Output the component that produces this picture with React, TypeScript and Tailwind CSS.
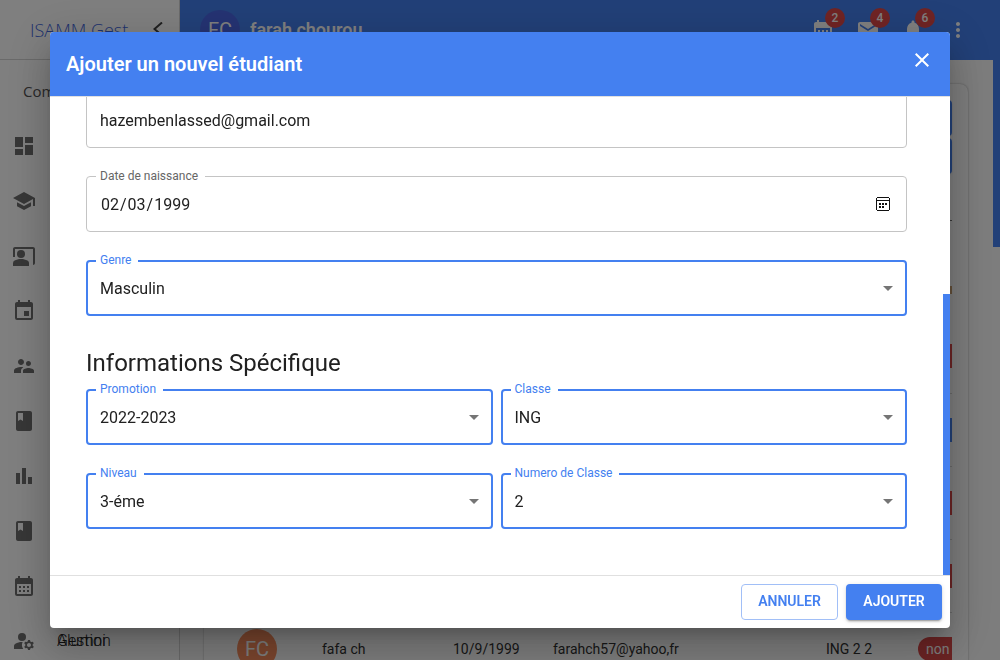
import { useId } from "react";
import type { ReactNode } from "react";
import type { IconType } from "react-icons";
import {
  MdArrowDropDown,
  MdBarChart,
  MdCalendarMonth,
  MdClass,
  MdClose,
  MdCoPresent,
  MdDashboard,
  MdEmail,
  MdEvent,
  MdManageAccounts,
  MdMoreVert,
  MdNotifications,
  MdSchool,
  MdSupervisorAccount,
} from "react-icons/md";

const navigation: { name: string; icon: IconType; labels?: string[] }[] = [
  { name: "Dashboard", icon: MdDashboard },
  { name: "Etudiants", icon: MdSchool },
  { name: "Enseignants", icon: MdCoPresent },
  { name: "Evénements", icon: MdEvent },
  { name: "Alumni", icon: MdSupervisorAccount },
  { name: "Stages", icon: MdClass },
  { name: "Statistiques", icon: MdBarChart },
  { name: "Projets", icon: MdClass },
  { name: "Calendrier", icon: MdCalendarMonth },
  { name: "Gestion Alumni", icon: MdManageAccounts, labels: ["Gestion", "Alumni"] },
];

const notifications: { name: string; count: number; icon: IconType }[] = [
  { name: "Calendrier", count: 2, icon: MdCalendarMonth },
  { name: "Messages", count: 4, icon: MdEmail },
  { name: "Notifications", count: 6, icon: MdNotifications },
];

function Sidebar() {
  return (
    <aside className="flex w-[180px] shrink-0 flex-col border-r border-[#d4d4d4] bg-white">
      <div className="flex h-[60px] shrink-0 items-center justify-between border-b border-[#d4d4d4] pr-4 pl-[30px]">
        <span className="font-['Open_Sans',sans-serif] text-lg font-light text-[#3c64dc]">ISAMM Gest</span>
        <button type="button" aria-label="Réduire le menu" className="text-[#404040]">
          <svg width="10" height="16" viewBox="0 0 10 16" fill="none" stroke="currentColor" strokeWidth="2">
            <path d="M9 0.5 1.5 7 9 13.5" />
          </svg>
        </button>
      </div>
      <p className="h-[58px] shrink-0 px-[23px] pt-[19px] font-['Open_Sans',sans-serif] text-[15px] leading-6 text-[#525252]">
        Com
      </p>
      <nav className="flex flex-col">
        {navigation.map(({ name, icon: Icon, labels }) => (
          <a key={name} href="#" aria-label={name} className="flex h-[55px] shrink-0 items-center gap-[21px] px-3">
            <Icon className="size-6 shrink-0 text-[#6e6e6e]" />
            {labels && (
              <span className="grid text-base font-light text-[#202020]">
                {labels.map((label) => (
                  <span key={label} className="col-start-1 row-start-1">
                    {label}
                  </span>
                ))}
              </span>
            )}
          </a>
        ))}
      </nav>
    </aside>
  );
}

function TopBar() {
  return (
    <header className="flex h-[60px] shrink-0 items-center bg-[#4480f0] pr-[23px] pl-5 text-white">
      <span className="flex size-10 items-center justify-center rounded-full bg-[#4a66e6] text-xl">FC</span>
      <span className="ml-[10px] text-lg font-semibold">farah chourou</span>
      <div className="ml-auto flex items-center gap-[21px]">
        {notifications.map(({ name, count, icon: Icon }) => (
          <button key={name} type="button" aria-label={name} className="relative">
            <Icon className="size-6" />
            <span className="absolute -top-[10px] left-[14px] flex size-5 items-center justify-center rounded-full bg-[#e04848] text-xs font-medium">
              {count}
            </span>
          </button>
        ))}
        <button type="button" aria-label="Plus">
          <MdMoreVert className="size-6" />
        </button>
      </div>
    </header>
  );
}

function StatusCell({ children, className }: { children?: ReactNode; className: string }) {
  return (
    <td className="p-0 pl-4">
      <span className={className}>{children}</span>
    </td>
  );
}

function StudentsCard() {
  return (
    <section className="mt-6 mr-[25px] ml-6 flex-1 rounded-lg bg-[#fdfdfd] p-4 shadow-[0_0_2px_rgba(0,0,0,0.35)]">
      <div className="flex flex-col items-end gap-[2px]">
        <button type="button" aria-label="Ajouter" className="h-9 w-32 rounded bg-[#4480f0] shadow" />
        <button type="button" aria-label="Importer" className="h-9 w-32 rounded bg-[#4480f0] shadow" />
      </div>
      <div className="ml-auto h-[47px] w-48 border-b border-[#707070]" />
      <div className="mt-[26px] overflow-hidden">
        <table className="w-full table-fixed border-collapse text-left text-sm text-[#303030]">
          <colgroup>
            <col className="w-[86px]" />
            <col className="w-[131px]" />
            <col className="w-[100px]" />
            <col />
            <col className="w-[92px]" />
            <col className="w-[50px]" />
          </colgroup>
          <tbody>
            <tr className="h-[73px]">
              <td colSpan={5} />
              <StatusCell className="mt-3 block h-2 w-16 bg-[#c8a074]" />
            </tr>
            <tr className="h-[73px] border-b border-[#d4d4d4]">
              <td colSpan={5} />
              <StatusCell className="block h-6 w-16 rounded-full bg-[#d94848]" />
            </tr>
            <tr className="h-[73px] border-b border-[#d4d4d4]">
              <td colSpan={5} />
              <StatusCell className="block h-6 w-16 rounded-full bg-[#4480f0]" />
            </tr>
            <tr className="h-[73px] border-b border-[#d4d4d4]">
              <td colSpan={5} />
              <StatusCell className="block h-6 w-16 rounded-full bg-[#d94848]" />
            </tr>
            <tr className="h-[73px] border-b border-[#d4d4d4]">
              <td colSpan={5} />
              <StatusCell className="block h-6 w-16 rounded-full bg-[#d94848]" />
            </tr>
            <tr className="h-[73px] border-b border-[#d4d4d4]">
              <td className="p-0 pl-[17px]">
                <span className="flex size-10 items-center justify-center rounded-full bg-[#f88c5c] text-xl text-white">
                  FC
                </span>
              </td>
              <td className="p-0 pl-4">fafa ch</td>
              <td className="p-0 pl-4">10/9/1999</td>
              <td className="p-0 pl-4">farahch57@yahoo,fr</td>
              <td className="p-0 pl-4">ING 2 2</td>
              <StatusCell className="flex h-6 w-16 items-center rounded-full bg-[#d94848] pl-2 text-sm text-white">
                non
              </StatusCell>
            </tr>
          </tbody>
        </table>
      </div>
    </section>
  );
}

function FieldLabel({ id, active, children }: { id: string; active?: boolean; children: ReactNode }) {
  const color = active ? "text-[#4480f0]" : "text-[#666666]";
  return (
    <label htmlFor={id} className={`absolute -top-2 left-[10px] bg-white pr-[7px] pl-1 text-xs leading-4 ${color}`}>
      {children}
    </label>
  );
}

function InputField({ label, type, value }: { label: string; type: string; value: string }) {
  const id = useId();
  return (
    <div className="relative">
      <input
        id={id}
        type={type}
        defaultValue={value}
        className="block h-14 w-full rounded border border-[#c4c4c4] bg-white px-[13px] text-base text-[#212121] outline-none [&::-webkit-calendar-picker-indicator]:opacity-0 [&[type=date]]:pt-[2px]"
      />
      {type === "date" && (
        <svg
          viewBox="0 0 14 14"
          className="pointer-events-none absolute top-[21px] right-[17px] size-[14px]"
          shapeRendering="crispEdges"
          aria-hidden="true"
        >
          <path
            d="M1 0h12v1H1zM1 13h12v1H1zM0 1h1v12H0zM13 1h1v12h-1zM1 3h12v1H1zM3 6h2v2H3zM6 6h2v2H6zM9 6h2v2H9zM3 9h2v2H3zM6 9h2v2H6z"
            fill="#111111"
          />
        </svg>
      )}
      <FieldLabel id={id}>{label}</FieldLabel>
    </div>
  );
}

function SelectField({ label, options }: { label: string; options: string[] }) {
  const id = useId();
  return (
    <div className="relative">
      <select
        id={id}
        className="block h-14 w-full appearance-none rounded border-2 border-[#4480f0] bg-white px-3 pt-[2px] text-base text-[#212121] outline-none"
      >
        {options.map((option) => (
          <option key={option}>{option}</option>
        ))}
      </select>
      <MdArrowDropDown className="pointer-events-none absolute top-4 right-[7px] size-6 text-[#757575]" />
      <FieldLabel id={id} active>
        {label}
      </FieldLabel>
    </div>
  );
}

function StudentDialog() {
  return (
    <div className="fixed inset-0 flex items-center justify-center bg-black/50 p-8">
      <div
        role="dialog"
        aria-modal="true"
        aria-labelledby="dialog-title"
        className="flex h-full w-full max-w-[900px] flex-col overflow-hidden rounded bg-white shadow-[0_11px_15px_-7px_rgba(0,0,0,0.2),0_24px_38px_3px_rgba(0,0,0,0.14),0_9px_46px_8px_rgba(0,0,0,0.12)]"
      >
        <div className="flex shrink-0 items-start justify-between bg-[#4480f0] text-white">
          <h2 id="dialog-title" className="p-4 text-xl leading-8 font-semibold">
            Ajouter un nouvel étudiant
          </h2>
          <button type="button" aria-label="Fermer" className="m-2 flex size-10 items-center justify-center">
            <MdClose className="size-6" />
          </button>
        </div>
        <form id="student-form" className="flex min-h-0 flex-1 border-y border-[#e0e0e0]">
          <div className="flex min-w-0 flex-1 flex-col justify-end overflow-hidden px-9 pb-[46px]">
            <div className="flex flex-col gap-7">
              <InputField label="Email" type="email" value="hazembenlassed@gmail.com" />
              <InputField label="Date de naissance" type="date" value="1999-02-03" />
              <SelectField label="Genre" options={["Masculin", "Féminin"]} />
            </div>
            <h3 className="mt-[31px] mb-[10px] text-2xl leading-8 text-[#212121]">Informations Spécifique</h3>
            <div className="grid grid-cols-2 gap-x-2 gap-y-7">
              <SelectField label="Promotion" options={["2022-2023"]} />
              <SelectField label="Classe" options={["ING"]} />
              <SelectField label="Niveau" options={["3-éme"]} />
              <SelectField label="Numero de Classe" options={["2"]} />
            </div>
          </div>
          <div className="flex w-[7px] shrink-0 flex-col justify-end">
            <div className="h-[281px] bg-[#4480f0]" />
          </div>
        </form>
        <div className="flex shrink-0 justify-end gap-2 p-2 text-sm font-semibold">
          <button
            type="button"
            className="h-9 min-w-[97px] rounded border border-[#a1bff7] px-[15px] pb-[2px] text-[#4480f0]"
          >
            ANNULER
          </button>
          <button
            type="submit"
            form="student-form"
            className="h-9 min-w-24 rounded bg-[#4480f0] px-4 pb-[2px] text-white shadow-[0_3px_1px_-2px_rgba(0,0,0,0.2),0_2px_2px_0_rgba(0,0,0,0.14),0_1px_5px_0_rgba(0,0,0,0.12)]"
          >
            AJOUTER
          </button>
        </div>
      </div>
    </div>
  );
}

export default function App() {
  return (
    <div className="font-[Roboto,sans-serif]">
      <div className="flex h-screen overflow-hidden bg-[#fafafa]">
        <Sidebar />
        <main className="flex min-w-0 flex-1 flex-col">
          <TopBar />
          <StudentsCard />
        </main>
        <div className="w-[7px] shrink-0">
          <div className="h-[247px] bg-[#4480f0]" />
        </div>
      </div>
      <StudentDialog />
    </div>
  );
}
